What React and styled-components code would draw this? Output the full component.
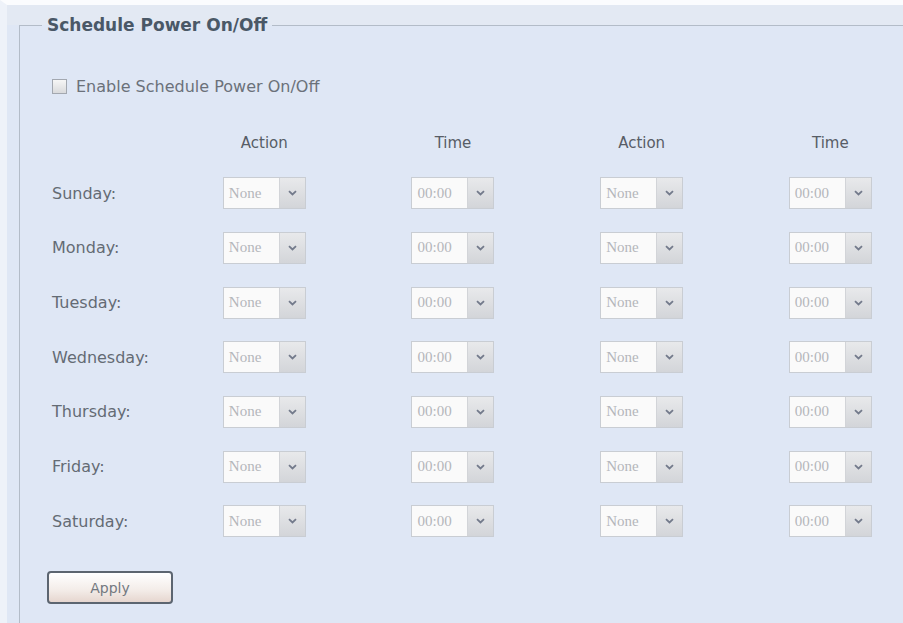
import React from 'react'
import styled, { createGlobalStyle } from 'styled-components'

const GlobalStyle = createGlobalStyle`
  html, body {
    margin: 0;
    padding: 0;
    overflow: hidden;
    background: #dfe7f5;
  }
  body {
    font-family: "DejaVu Sans", Verdana, sans-serif;
  }
`

const Page = styled.div`
  height: 100vh;
  border-top: 5px solid #fbfcfe;
  border-left: 7px solid #eef2f9;
  background: linear-gradient(#e3e9f3 0, #e3e9f3 20px, #dfe7f5 20px);
  box-sizing: border-box;
  overflow: hidden;
`

const Fieldset = styled.fieldset`
  margin: 10px -40px 0 12px;
  padding: 0 0 40px 32px;
  border: 1px solid #b3bcc8;
  min-width: 0;
`

const Legend = styled.legend`
  margin-left: -10px;
  padding: 0 5px;
  height: 20px;
  line-height: 20px;
  font-size: 17px;
  font-weight: bold;
  color: #4a5867;
`

const CheckRow = styled.label`
  display: flex;
  align-items: center;
  gap: 9px;
  margin-top: 41px;
  height: 20px;
  font-size: 16px;
  color: #6b717a;
`

const CheckBox = styled.span`
  width: 15px;
  height: 15px;
  box-sizing: border-box;
  border: 1px solid #a3a8b0;
  background: linear-gradient(#f6f6f6, #d9dadc);
`

const Grid = styled.div`
  display: grid;
  grid-template-columns: 118px repeat(4, 188.67px);
  grid-template-rows: 22.5px repeat(7, 32px);
  row-gap: 22.7px;
  margin-top: 36px;
  align-items: center;
`

const Head = styled.div`
  justify-self: center;
  align-self: start;
  font-size: 15px;
  line-height: 22px;
  color: #575d66;
`

const Day = styled.div`
  font-size: 16px;
  color: #646b74;
`

const Select = styled.div`
  justify-self: center;
  display: flex;
  width: 83px;
  height: 32px;
  box-sizing: border-box;
  border: 1px solid #c9cdd3;
  background: #fafafa;
`

const SelectText = styled.div`
  flex: 1;
  display: flex;
  align-items: center;
  padding-left: 5px;
  font-family: "Liberation Serif", "Times New Roman", serif;
  font-size: 15px;
  color: #b4b6ba;
  border-right: 1px solid #d2d4d8;
`

const SelectButton = styled.div`
  width: 25px;
  display: flex;
  align-items: center;
  justify-content: center;
  background: linear-gradient(#e8e9eb, #d3d5d9);
`

const ApplyButton = styled.button`
  margin: 34px 0 0 -5px;
  width: 126px;
  height: 33px;
  border: 2px solid #5c6570;
  border-radius: 4px;
  background: linear-gradient(#ffffff, #f3ece8 60%, #e6d6cf);
  font-family: "DejaVu Sans", Verdana, sans-serif;
  font-size: 14px;
  color: #737880;
  cursor: pointer;
`

const Chevron = () => (
  <svg width="9" height="6" viewBox="0 0 9 6">
    <path d="M1 1.2 L4.5 4.5 L8 1.2" fill="none" stroke="#737a8b" strokeWidth="1.8" />
  </svg>
)

const Dropdown = ({ value }) => (
  <Select>
    <SelectText>{value}</SelectText>
    <SelectButton>
      <Chevron />
    </SelectButton>
  </Select>
)

const days = ['Sunday', 'Monday', 'Tuesday', 'Wednesday', 'Thursday', 'Friday', 'Saturday']

export default function App() {
  return (
    <>
      <GlobalStyle />
      <Page>
        <Fieldset>
          <Legend>Schedule Power On/Off</Legend>
          <CheckRow>
            <CheckBox />
            Enable Schedule Power On/Off
          </CheckRow>
          <Grid>
            <div />
            <Head>Action</Head>
            <Head>Time</Head>
            <Head>Action</Head>
            <Head>Time</Head>
            {days.map(day => (
              <React.Fragment key={day}>
                <Day>{day}:</Day>
                <Dropdown value="None" />
                <Dropdown value="00:00" />
                <Dropdown value="None" />
                <Dropdown value="00:00" />
              </React.Fragment>
            ))}
          </Grid>
          <ApplyButton>Apply</ApplyButton>
        </Fieldset>
      </Page>
    </>
  )
}
